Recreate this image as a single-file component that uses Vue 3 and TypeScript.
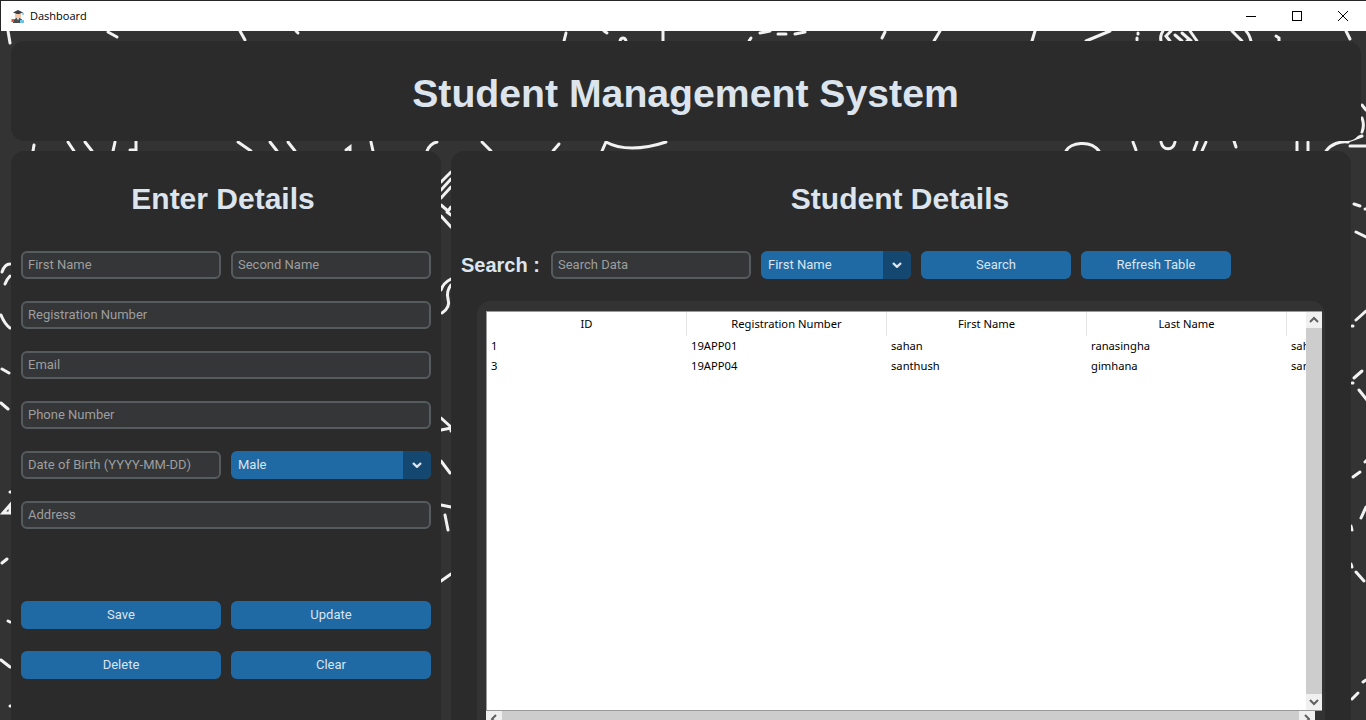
<template>
  <div class="window">
    <!-- doodle wallpaper behind the panels -->
    <svg class="doodles" viewBox="0 0 1366 720" fill="none" stroke="#f2f2f2" stroke-width="3" stroke-linecap="round">
      <path v-for="(d, i) in doodles" :key="i" :d="d" />
    </svg>

    <div class="titlebar">
      <svg class="app-icon" viewBox="0 0 16 16">
        <path d="M3 4.500 8 2l5 2.500-5 2z" fill="#3b3f46" />
        <path d="M5 6h6v2.500a3 3 0 0 1-6 0z" fill="#f3c6a5" />
        <path d="M3 15c0-3.500 2-5 5-5s5 1.500 5 5z" fill="#4a4d52" />
        <path d="M7 10h2l-1 2.500z" fill="#fff" />
        <rect x="1.500" y="11" width="2.500" height="3" fill="#e4572e" />
        <rect x="10" y="12" width="4" height="3" fill="#6cc3e8" />
        <path d="M13 4.500V7" stroke="#39a7d8" stroke-width="1" />
      </svg>
      <span class="app-title">Dashboard</span>
      <div class="win-controls">
        <svg viewBox="0 0 46 30" class="win-btn"><path d="M18 15.500h10" stroke="#000" fill="none" /></svg>
        <svg viewBox="0 0 46 30" class="win-btn"><rect x="18.500" y="10.500" width="9" height="9" stroke="#000" fill="none" /></svg>
        <svg viewBox="0 0 46 30" class="win-btn"><path d="M18 10l10 10M28 10 18 20" stroke="#000" fill="none" /></svg>
      </div>
    </div>

    <div class="content">
      <header class="panel banner">
        <h1>Student Management System</h1>
      </header>

      <div class="columns">
        <section class="panel enter">
          <h2>Enter Details</h2>
          <div class="form">
            <input class="field" placeholder="First Name" />
            <input class="field" placeholder="Second Name" />
            <input class="field wide" placeholder="Registration Number" />
            <input class="field wide" placeholder="Email" />
            <input class="field wide" placeholder="Phone Number" />
            <input class="field" placeholder="Date of Birth (YYYY-MM-DD)" />
            <div class="combo">
              <span class="combo-text">Male</span>
              <span class="combo-arrow">
                <svg viewBox="0 0 10 6" width="10" height="6"><path d="M1 1 5 4.800 9 1" /></svg>
              </span>
            </div>
            <input class="field wide" placeholder="Address" />
          </div>
          <div class="form actions">
            <button class="btn">Save</button>
            <button class="btn">Update</button>
            <button class="btn">Delete</button>
            <button class="btn">Clear</button>
          </div>
        </section>

        <section class="panel details">
          <h2>Student Details</h2>
          <div class="search-row">
            <label class="search-label">Search :</label>
            <input class="field search-input" placeholder="Search Data" />
            <div class="combo search-combo">
              <span class="combo-text">First Name</span>
              <span class="combo-arrow">
                <svg viewBox="0 0 10 6" width="10" height="6"><path d="M1 1 5 4.800 9 1" /></svg>
              </span>
            </div>
            <button class="btn search-btn">Search</button>
            <button class="btn search-btn">Refresh Table</button>
          </div>

          <div class="table-frame">
            <div class="tree">
              <div class="tree-main">
                <div class="tree-view">
                  <div class="tree-head">
                    <div v-for="c in headers" :key="c" class="head-cell">{{ c }}</div>
                  </div>
                  <div v-for="s in students" :key="s.id" class="tree-row">
                    <div class="cell">{{ s.id }}</div>
                    <div class="cell">{{ s.reg }}</div>
                    <div class="cell">{{ s.first }}</div>
                    <div class="cell">{{ s.last }}</div>
                    <div class="cell">{{ s.email }}</div>
                  </div>
                </div>
                <div class="vbar">
                  <div class="bar-btn">
                    <svg viewBox="0 0 16 16" width="16" height="16"><path d="M4 10l4-4 4 4" /></svg>
                  </div>
                  <div class="vthumb"></div>
                  <div class="bar-btn">
                    <svg viewBox="0 0 16 16" width="16" height="16"><path d="M4 6l4 4 4-4" /></svg>
                  </div>
                </div>
              </div>
              <div class="hbar">
                <div class="bar-btn">
                  <svg viewBox="0 0 16 16" width="16" height="16"><path d="M10 4 6 8l4 4" /></svg>
                </div>
                <div class="hthumb"></div>
                <div class="bar-btn">
                  <svg viewBox="0 0 16 16" width="16" height="16"><path d="M6 4l4 4-4 4" /></svg>
                </div>
              </div>
            </div>
          </div>
        </section>
      </div>
    </div>
  </div>
</template>

<script setup lang="ts">
interface Student {
  id: number;
  reg: string;
  first: string;
  last: string;
  email: string;
}

const headers = ['ID', 'Registration Number', 'First Name', 'Last Name', 'Email'];

const students: Student[] = [
  { id: 1, reg: '19APP01', first: 'sahan', last: 'ranasingha', email: 'sahan@gmail.com' },
  { id: 3, reg: '19APP04', first: 'santhush', last: 'gimhana', email: 'santhush@gmail.com' },
];

// only the bits that show in the gaps between the panels
const doodles: string[] = [
  // top strip
  'M8 31l2 12', 'M108 32l9 5', 'M240 31l5 9', 'M296 31l2 2', 'M564 41l2-8', 'M604 31l3 2',
  'M620 41c1-4 5-4 6 0', 'M663 31v10', 'M749 41l2-3', 'M760 33l10-2M778 34h8M795 34l10-2',
  'M882 38l3-6', 'M934 41l6-10', 'M1032 41l3-10', 'M1086 41l24-10', 'M1138 33v1M1137 38v2',
  'M1161 41c-1-4 0-7 2-10M1170 41l-4-5 5-5M1175 35l7 6M1182 33l8 7-3 1M1190 31l7 10',
  'M1232 31l10 10M1246 31c3 3 4 6 5 10', 'M1276 36l3 2v3', 'M1346 31l4 8',
  // strip under the banner
  'M33 151l1-6', 'M68 142l6 9', 'M85 142l7 9', 'M113 151l2-9', 'M130 150h6v-9',
  'M238 142l13 9', 'M270 142l7 9', 'M288 142l7 9', 'M346 150l4-3v4', 'M371 142l2 9',
  'M427 151c2-5 6-8 10-9', 'M482 142l9 9', 'M553 151l6-7',
  'M602 151l4-9c14 8 36 8 60 0', 'M1066 151c4-8 24-12 33 0', 'M1133 142l3 8',
  'M1161 142c2 9 12 9 14 0', 'M1194 150l3-8M1202 151l4-9', 'M1234 141l2 6',
  'M1297 142v9M1308 142v9', 'M1326 151c5-7 14-10 22-9', 'M1350 146h16M1348 141l14-5',
  // right edge
  'M1362 105l4 5', 'M1362 118c2 5 2 9 0 14', 'M1354 204l6 2', 'M1365 209h1', 'M1356 232l10 5',
  'M1356 320l10-9', 'M1352 326h1', 'M1354 378l8-7', 'M1352 383h1', 'M1359 390l8 10',
  'M1365 462l2-2', 'M1353 477l7-5', 'M1361 518l5-11', 'M1352 530l-1-4', 'M1351 564l1 3',
  'M1356 572l8 9', 'M1352 699l6-6', 'M1363 682l3-2',
  // left edge
  'M2 272c2-6 5-8 8-8M10 276c-2 2-4 5-5 8', 'M1 315c2 5 5 10 9 13',
  'M2 369l7 4', 'M1 403l7 6', 'M10 492h1', 'M3 513l7-8v8z', 'M2 563l5-4', 'M8 621l2 1',
  'M1 660l9 7', 'M10 706h1',
  // gutter between the two panels
  'M441 182l10-10M441 190l10-11M441 198l10-11M441 205l7 6 3-4M447 212l4 3', 'M441 216l10 11',
  'M441 290c2-6 6-9 10-11M451 285c-4 5-4 10-3 14 2 6 0 10-6 14',
  'M441 418l10 9', 'M441 430l10-2v3', 'M441 461l9 12', 'M441 505l10 2M445 515l3 15',
  'M441 581l10-7',
];
</script>

<style>
html,
body {
  margin: 0;
  overflow: hidden;
}
</style>

<style scoped>
.window {
  position: relative;
  width: 1366px;
  height: 720px;
  overflow: hidden;
  background: #333333;
  font-family: Roboto, "Liberation Sans", sans-serif;
}
.doodles {
  position: absolute;
  top: 0;
  left: 0;
  width: 1366px;
  height: 720px;
}
.titlebar {
  position: relative;
  display: flex;
  align-items: center;
  height: 30px;
  background: #fff;
  border-top: 1px solid #262626;
  border-left: 1px solid #262626;
  font-family: "Open Sans", "Liberation Sans", sans-serif;
  font-size: 11px;
  color: #000;
}
.app-icon {
  width: 16px;
  height: 16px;
  margin-left: 9px;
}
.app-title {
  margin-left: 4px;
  padding-bottom: 2px;
}
.win-controls {
  display: flex;
  margin-left: auto;
}
.win-btn {
  width: 46px;
  height: 30px;
}
.content {
  position: relative;
  padding: 10px 5px 0 11px;
  box-sizing: border-box;
}
.panel {
  background: #2b2b2b;
  border-radius: 14px;
  color: #dce4ee;
}
.banner {
  display: flex;
  align-items: center;
  justify-content: center;
  height: 100px;
  margin-bottom: 10px;
}
h1 {
  margin: 0;
  padding: 6px 1px 0 0;
  font-family: "Liberation Sans", Arial, sans-serif;
  font-size: 39.200px;
  font-weight: 700;
}
h2 {
  margin: 0;
  height: 100px;
  line-height: 95px;
  font-family: "Liberation Sans", Arial, sans-serif;
  font-size: 30px;
  font-weight: 700;
  text-align: center;
}
.enter h2 {
  padding-right: 6px;
}
.details h2 {
  padding-right: 2px;
}
.columns {
  display: flex;
  gap: 10px;
}
.enter {
  width: 430px;
  height: 590px;
  padding: 0 10px;
  box-sizing: border-box;
}
.details {
  width: 900px;
  height: 590px;
  padding: 0 10px;
  box-sizing: border-box;
}
.form {
  display: grid;
  grid-template-columns: 200px 200px;
  column-gap: 10px;
  row-gap: 22px;
}
.wide {
  grid-column: span 2;
}
.actions {
  margin-top: 72px;
}
.field {
  height: 28px;
  width: 100%;
  box-sizing: border-box;
  padding: 0 5px 2px;
  background: #343638;
  border: 2px solid #565b5e;
  border-radius: 6px;
  outline: none;
  color: #dce4ee;
  font-family: inherit;
  font-size: 13px;
}
.field::placeholder {
  color: #9e9e9e;
  opacity: 1;
}
.combo {
  display: flex;
  height: 28px;
  background: #1f6aa5;
  border-radius: 6px;
  overflow: hidden;
  font-size: 13px;
  color: #dce4ee;
}
.combo-text {
  flex: 1;
  line-height: 28px;
  padding-left: 7px;
}
.combo-arrow {
  display: flex;
  align-items: center;
  justify-content: center;
  width: 28px;
  background: #144870;
}
.combo-arrow svg {
  fill: none;
  stroke: #dce4ee;
  stroke-width: 2.400;
}
.btn {
  height: 28px;
  padding: 0 0 2px;
  background: #1f6aa5;
  border: none;
  border-radius: 6px;
  color: #dce4ee;
  font-family: inherit;
  font-size: 13px;
}
.search-row {
  display: flex;
  align-items: center;
  gap: 10px;
}
.search-label {
  width: 80px;
  font-family: "Liberation Sans", Arial, sans-serif;
  font-size: 20px;
  font-weight: 700;
  white-space: nowrap;
}
.search-input {
  width: 200px;
}
.search-combo {
  width: 150px;
}
.search-btn {
  width: 150px;
}
.table-frame {
  width: 848px;
  height: 440px;
  margin: 22px 0 0 16px;
  padding: 10px 2px 0 9px;
  box-sizing: border-box;
  background: #333333;
  border-radius: 14px;
}
.tree {
  width: 836px;
}
.tree-main {
  display: flex;
  height: 400px;
  background: #fff;
  border-top: 1px solid #9a9a9a;
  border-left: 1px solid #9a9a9a;
  border-bottom: 1px solid #9a9a9a;
  box-sizing: border-box;
}
.tree-view {
  width: 819px;
  overflow: hidden;
  font-family: "Noto Sans", "Open Sans", sans-serif;
  font-size: 11.200px;
  color: #000;
}
.tree-head,
.tree-row {
  display: flex;
  width: 1000px;
}
.tree-head {
  height: 24px;
}
.head-cell {
  flex: 0 0 200px;
  box-sizing: border-box;
  border-right: 1px solid #e5e5e5;
  line-height: 24px;
  text-align: center;
}
.tree-row {
  height: 20px;
  line-height: 20px;
}
.cell {
  flex: 0 0 200px;
  box-sizing: border-box;
  padding-left: 4px;
  white-space: nowrap;
  overflow: hidden;
}
.vbar {
  display: flex;
  flex-direction: column;
  width: 16px;
  background: #f0f0f0;
}
.vthumb {
  flex: 1;
  background: #cdcdcd;
}
.bar-btn {
  display: flex;
  flex: 0 0 16px;
  height: 16px;
  background: #f0f0f0;
}
.bar-btn svg {
  fill: none;
  stroke: #606060;
  stroke-width: 2;
}
.hbar {
  display: flex;
  width: 829px;
  height: 16px;
}
.hthumb {
  flex: 1;
  background: #cdcdcd;
}
</style>
